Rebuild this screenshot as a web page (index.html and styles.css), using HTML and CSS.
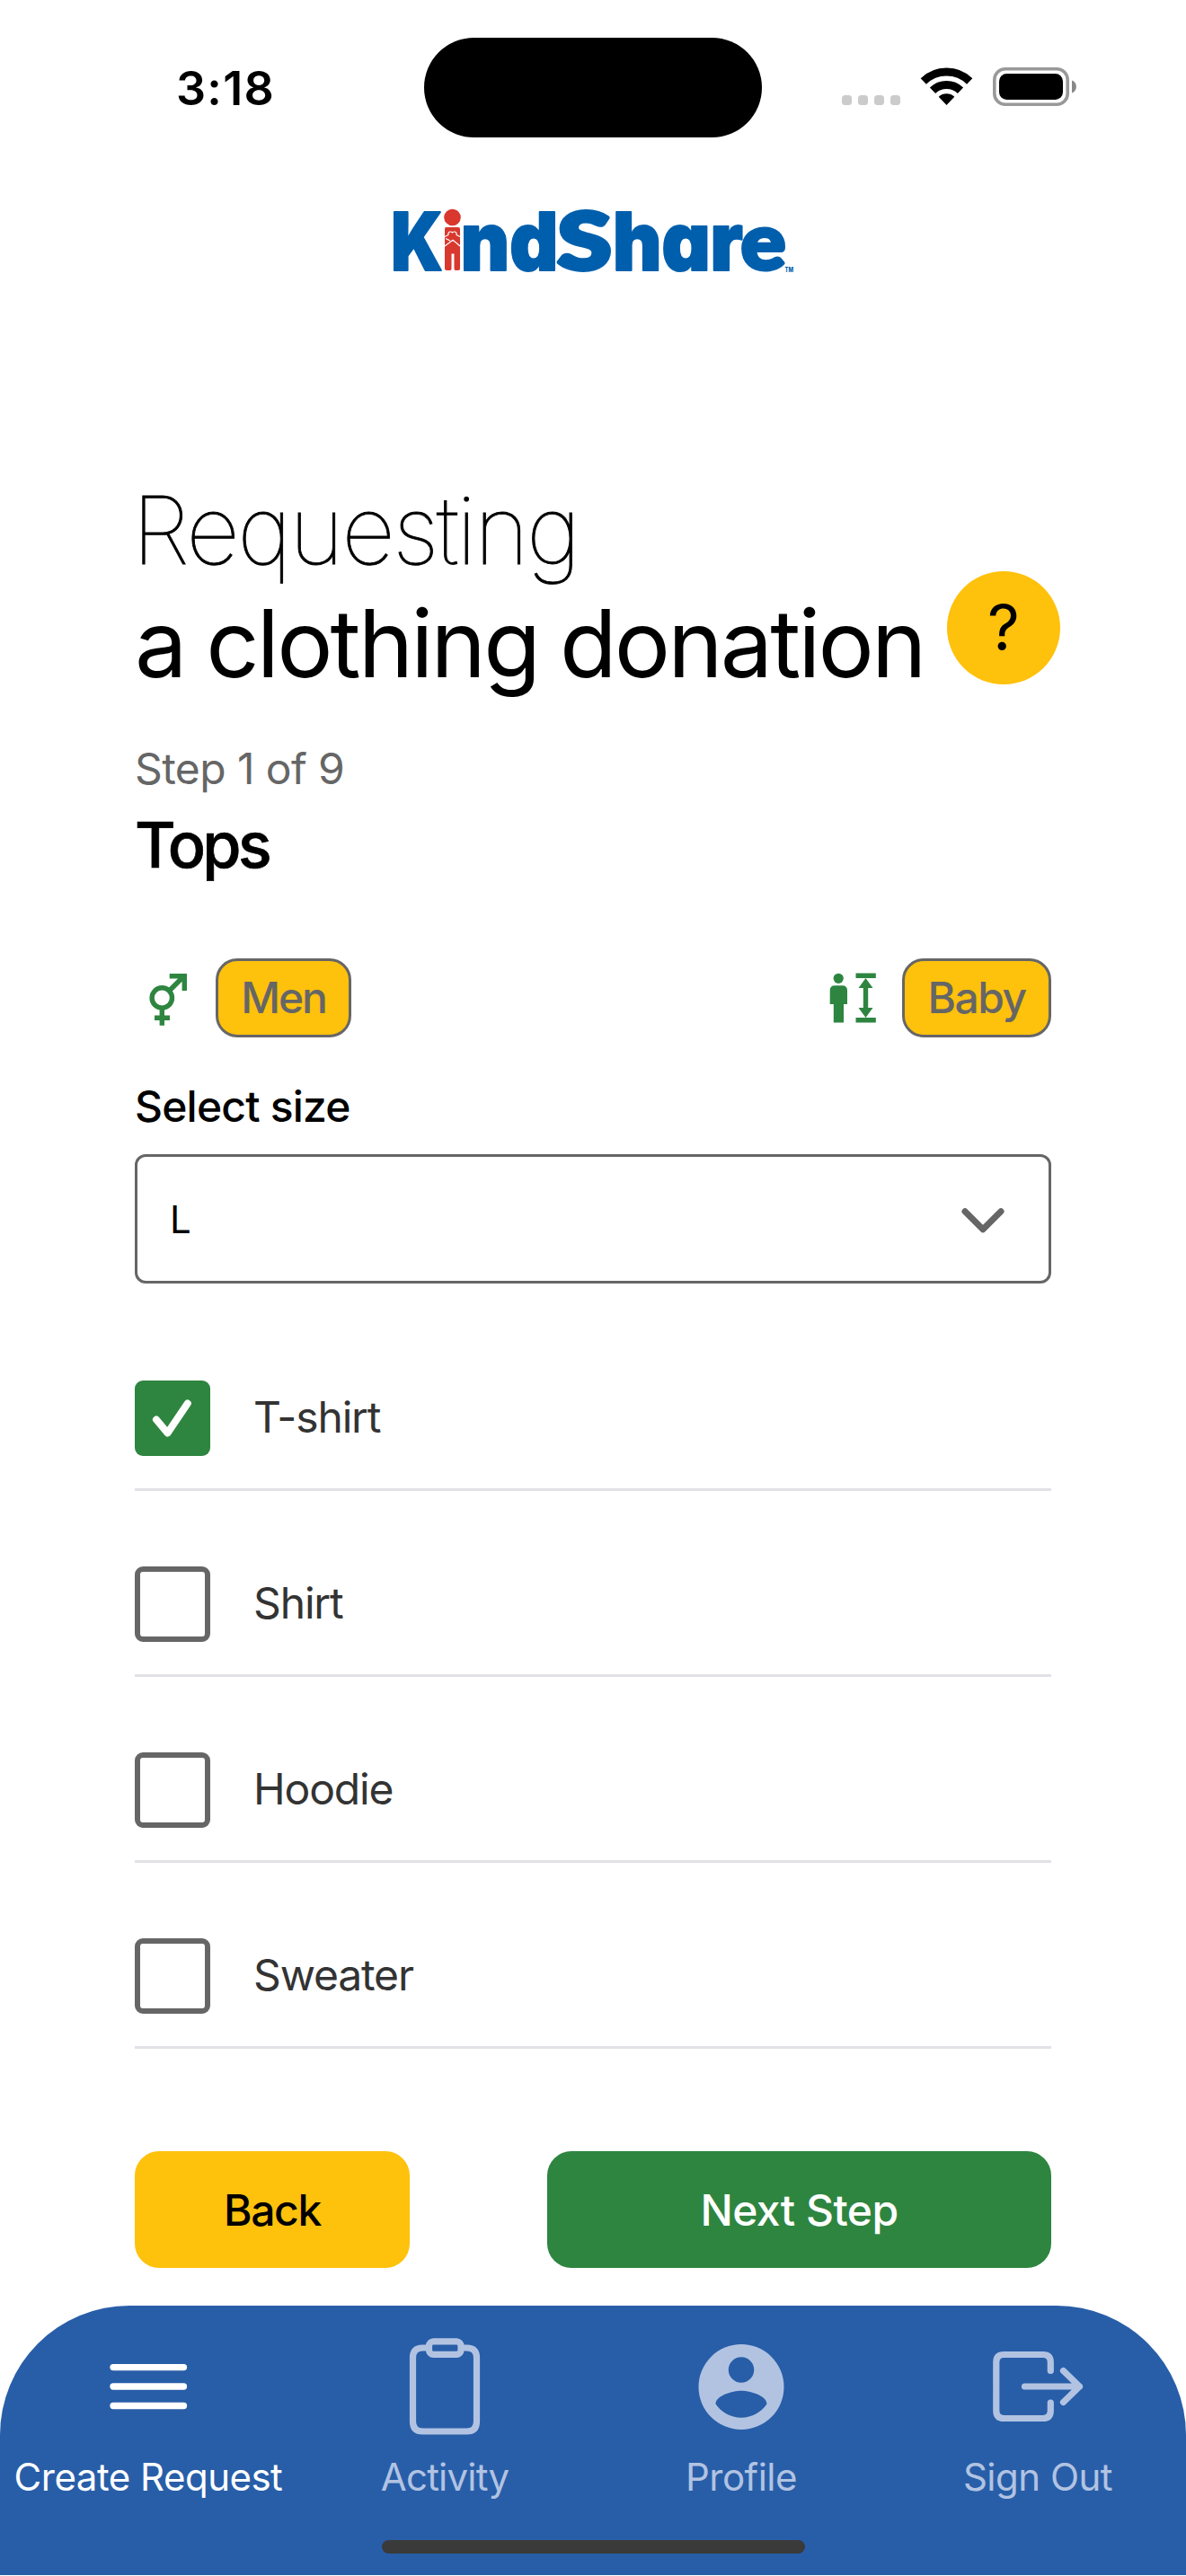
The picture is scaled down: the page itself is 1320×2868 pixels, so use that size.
FILE: index.html
```html
<!DOCTYPE html>
<html lang="en">
<head>
<meta charset="utf-8">
<title>KindShare</title>
<link rel="stylesheet" href="styles.css">
</head>
<body>
<header class="status">
  <div class="status-time">3:18</div>
  <div class="island"></div>
  <svg class="status-icons" width="264" height="46" viewBox="936 74 264 46">
    <g fill="#cbcbcb"><rect x="937" y="106" width="11" height="11" rx="3.5"/><rect x="955" y="106" width="11" height="11" rx="3.5"/><rect x="973" y="106" width="11" height="11" rx="3.5"/><rect x="991" y="106" width="11" height="11" rx="3.5"/></g>
    <g fill="none" stroke="#000" stroke-width="9"><path d="M1027.800 90.500A37 37 0 0 1 1079.200 90.500"/><path d="M1038 100.700A22.500 22.500 0 0 1 1069 100.700"/></g>
    <path d="M1044.700 107.800A13 13 0 0 1 1062.300 107.800L1053.500 117Z"/>
    <rect x="1106.800" y="76.800" width="81.400" height="39.400" rx="12" fill="none" stroke="#999" stroke-width="3.600"/>
    <rect x="1112" y="82" width="71" height="29" rx="8.500"/>
    <path d="M1193 89.500C1199.500 91.500 1199.500 101.500 1193 103.500Z" fill="#888"/>
  </svg>
</header>

<div class="brand">
  <svg width="450" height="84" viewBox="436 226 450 84" role="img" aria-label="KindShare">
    <g class="logo-text">
      <text x="435.300" y="300.500" textLength="57.500" lengthAdjust="spacingAndGlyphs">K</text>
      <text x="512.800" y="300.500" textLength="108.400" lengthAdjust="spacingAndGlyphs">nd</text>
      <text class="logo-soft" x="620.500" y="300" textLength="60" lengthAdjust="spacingAndGlyphs">S</text>
      <text x="682" y="300.500" textLength="145" lengthAdjust="spacingAndGlyphs">har</text>
      <text class="logo-soft logo-e" x="824.500" y="300" textLength="50" lengthAdjust="spacingAndGlyphs">e</text>
    </g>
    <text class="logo-tm" x="873.500" y="302.500" textLength="9.500" lengthAdjust="spacingAndGlyphs">TM</text>
    <g fill="#d8382e"><circle cx="503.500" cy="242" r="9.300"/><path d="M496.500 253h13.500q2 0 2 2v44q0 2-2 2h-3q-1.500 0-1.500-2v-16.500h-3V299q0 2-1.500 2h-4q-2 0-2-2v-44q0-2 1.500-2z"/></g>
    <path d="M495 263.500l4-2q-.5-3.500 2.500-3.500 2 0 2 1.500 0-1.500 2-1.500 3 0 2.500 3.500l4 2M496 265.500l5 2.500M495 274l9-6.800 8 6.800" fill="none" stroke="#fff" stroke-width="1.200"/>
  </svg>
</div>

<main class="content">
  <div class="title-row">
    <h1 class="title"><span class="title-light">Requesting</span><br><span class="title-main">a clothing donation</span></h1>
    <button class="help">?</button>
  </div>
  <p class="step">Step 1 of 9</p>
  <h2 class="section">Tops</h2>
  <div class="filters">
    <div class="filter">
      <svg class="gender" width="44" height="60" viewBox="165 1084 44 60" fill="none" stroke="#2e8540" stroke-width="5.400"><circle cx="180.300" cy="1112" r="11.200"/><path d="M188.500 1104L205 1087.500M188.700 1087.700H205.300V1104M180.300 1123.500v19.200M172 1134.300h17"/></svg>
      <span class="pill pill-men">Men</span>
    </div>
    <div class="filter">
      <svg class="height" width="52" height="56" viewBox="923 1084 52 56" fill="#2e8540"><circle cx="933.200" cy="1090.300" r="5.600"/><path d="M929 1098.200h8.500q5.500 0 5.500 5.500v15.300h-4v20.500h-11.200V1119h-4.100v-15.300q0-5.500 5.300-5.500zM952.500 1084.600h22.300v5.400h-22.300zM952.500 1134.100h22.300v5.400h-22.300zM963.500 1090l8 11h-5.300v22h5.300l-8 11-8-11h5.300v-22h-5.300z"/></svg>
      <span class="pill pill-baby">Baby</span>
    </div>
  </div>
  <p class="label">Select size</p>
  <div class="select">
    <span>L</span>
    <svg width="50" height="30" viewBox="1069 1345 50 30" fill="none" stroke="#666" stroke-width="7" stroke-linecap="round" stroke-linejoin="round"><path d="M1074 1349.700L1094 1369.800L1114 1349.700"/></svg>
  </div>
  <ul class="options">
    <li class="option"><span class="box checked"><svg width="44" height="42" viewBox="170 1559 44 42" fill="none" stroke="#fff" stroke-width="8" stroke-linecap="round" stroke-linejoin="round"><path d="M174 1581.500L186.500 1596.500L208.800 1563.500"/></svg></span><span class="name">T-shirt</span></li>
    <li class="option"><span class="box"></span><span class="name">Shirt</span></li>
    <li class="option"><span class="box"></span><span class="name">Hoodie</span></li>
    <li class="option"><span class="box"></span><span class="name">Sweater</span></li>
  </ul>
  <div class="actions">
    <button class="btn back">Back</button>
    <button class="btn next">Next Step</button>
  </div>
</main>

<nav class="tabs">
  <a class="tab active">
    <svg width="110" height="110" viewBox="110 2603 110 110" stroke="#fff" stroke-width="7.300" stroke-linecap="round"><path d="M126 2636.600h78.500M126 2658h78.500M126 2679.500h78.500"/></svg>
    <span>Create Request</span>
  </a>
  <a class="tab tab-activity">
    <svg width="110" height="110" viewBox="440 2603 110 110" fill="none" stroke="#b2c3e2" stroke-width="7.200"><path d="M477 2615h-6.500q-11 0-11 11v71q0 11 11 11h49q11 0 11-11v-71q0-11-11-11H513"/><rect x="477.500" y="2607.800" width="35.500" height="14.600" rx="5"/></svg>
    <span>Activity</span>
  </a>
  <a class="tab">
    <svg width="110" height="110" viewBox="0.420 0.320 23.160 23.160" fill="#b2c3e2"><path d="M12 19.200C9.500 19.200 7.290 17.920 6 16C6.030 14 10 12.900 12 12.900C14 12.900 17.970 14 18 16C16.710 17.920 14.500 19.200 12 19.200M12 5A3 3 0 0 1 15 8A3 3 0 0 1 12 11A3 3 0 0 1 9 8A3 3 0 0 1 12 5M12 2A10 10 0 0 0 2 12A10 10 0 0 0 12 22A10 10 0 0 0 22 12A10 10 0 0 0 12 2Z"/></svg>
    <span>Profile</span>
  </a>
  <a class="tab">
    <svg width="110" height="110" viewBox="1100 2603 110 110" fill="none" stroke="#b2c3e2" stroke-width="7.200" stroke-linecap="round" stroke-linejoin="round"><path d="M1169.300 2640.500V2631q0-8.500-8.500-8.500h-43.500q-8.500 0-8.500 8.500v54q0 8.500 8.500 8.500h43.500q8.500 0 8.500-8.500v-9M1140.500 2658h61M1183.500 2640.500l18 17.500-18 17.500"/></svg>
    <span>Sign Out</span>
  </a>
  <div class="home-indicator"></div>
</nav>
</body>
</html>
```
FILE: styles.css
```css
* { box-sizing: border-box; margin: 0; padding: 0; }
body { width: 1320px; height: 2868px; background: #fff; color: #000; font-family: Inter, "Liberation Sans", sans-serif; overflow: hidden; display: flex; flex-direction: column; }
svg { display: block; flex: none; overflow: visible; }
button { border: 0; font-family: inherit; color: #000; }

.status { display: grid; grid-template-columns: 472px 376px 472px; height: 194px; align-items: center; }
.status-time { padding-left: 196px; font-size: 52px; font-weight: 600; line-height: 60px; padding-top: 3px; letter-spacing: 1.280px; }
.island { height: 111px; border-radius: 56px; background: #000; }
.status-icons { margin-left: 88px; }

.brand { margin-top: 32px; padding-left: 436px; }
.logo-text { font-size: 90px; font-weight: 900; fill: #005fad; stroke: #005fad; stroke-width: 2; stroke-linejoin: round; font-feature-settings: "cv11"; }
.logo-soft { font-family: Lato, sans-serif; font-size: 88px; stroke-width: 5; }
.logo-e { font-size: 87px; stroke-width: 4; }
.logo-tm { font-size: 7.500px; font-weight: 800; fill: #005fad; }

.content { width: 1020px; margin: 217px 150px 0; }
.title-row { display: flex; justify-content: space-between; align-items: flex-end; width: 1030px; }
.title { flex: none; width: 890px; font-size: 104px; line-height: 126px; font-weight: 400; white-space: nowrap; }
.title-light { margin-left: -3px; font-weight: 100; letter-spacing: -2.620px; -webkit-text-stroke: 0.900px #000; }
.title-main { letter-spacing: -2.900px; word-spacing: -2.500px; }
.help { width: 126px; height: 126px; flex: none; margin-bottom: 17px; border-radius: 50%; background: #fec10c; font-size: 70px; line-height: 126px; }
.step { margin-top: 47px; font-size: 48px; line-height: 60px; color: #666; letter-spacing: -0.600px; }
.section { margin-top: 13px; font-size: 70px; line-height: 84px; font-weight: 500; letter-spacing: -3.600px; -webkit-text-stroke: 0.700px #000; }
.filters { display: flex; justify-content: space-between; margin-top: 84px; }
.filter { display: flex; align-items: center; }
.gender { margin: 3px 31px 0 15px; }
.height { margin-right: 29px; }
.pill { height: 88px; border: 3px solid #666; border-radius: 24px; background: #fec10c; color: #666; font-size: 48px; font-weight: 500; line-height: 82px; text-align: center; }
.pill-men { width: 151px; letter-spacing: -2.200px; }
.pill-baby { width: 166px; letter-spacing: -1.500px; }
.label { margin-top: 47px; font-size: 48px; font-weight: 500; line-height: 60px; letter-spacing: -0.800px; }
.select { display: flex; justify-content: space-between; align-items: center; height: 144px; margin-top: 23px; padding: 0 48px 0 36px; border: 3px solid #666; border-radius: 12px; font-size: 42px; }
.select svg { margin-top: 4px; }
.options { list-style: none; margin-top: 24px; }
.option { display: flex; align-items: flex-end; height: 207px; padding-bottom: 36px; border-bottom: 3px solid #e1e1e6; }
.box { width: 84px; height: 84px; border: 6px solid #666; border-radius: 9px; margin-right: 48px; }
.checked { display: flex; align-items: center; justify-content: center; border: 0; background: #2e8540; }
.name { font-size: 48px; line-height: 82px; padding-bottom: 2px; color: #333; letter-spacing: -1.150px; }
.actions { display: flex; justify-content: space-between; margin-top: 114px; }
.btn { height: 130px; border-radius: 27px; font-size: 48px; font-weight: 500; }
.back { width: 306px; background: #fec10c; letter-spacing: -1.300px; }
.next { width: 561px; background: #2e8540; color: #fff; letter-spacing: -0.530px; }

.tabs { position: relative; display: grid; grid-template-columns: repeat(4, 330px); height: 300px; margin-top: 42px; padding-top: 35px; border-radius: 144px 144px 0 0; background: #285ea8; }
.tab { display: flex; flex-direction: column; align-items: center; gap: 21px; color: #b2c3e2; font-size: 42px; line-height: 50px; letter-spacing: -0.500px; }
.tab-activity { letter-spacing: -0.800px; }
.active { color: #fff; }
.home-indicator { position: absolute; left: 425px; bottom: 24px; width: 471px; height: 15px; border-radius: 8px; background: #3a3a3a; }
```
